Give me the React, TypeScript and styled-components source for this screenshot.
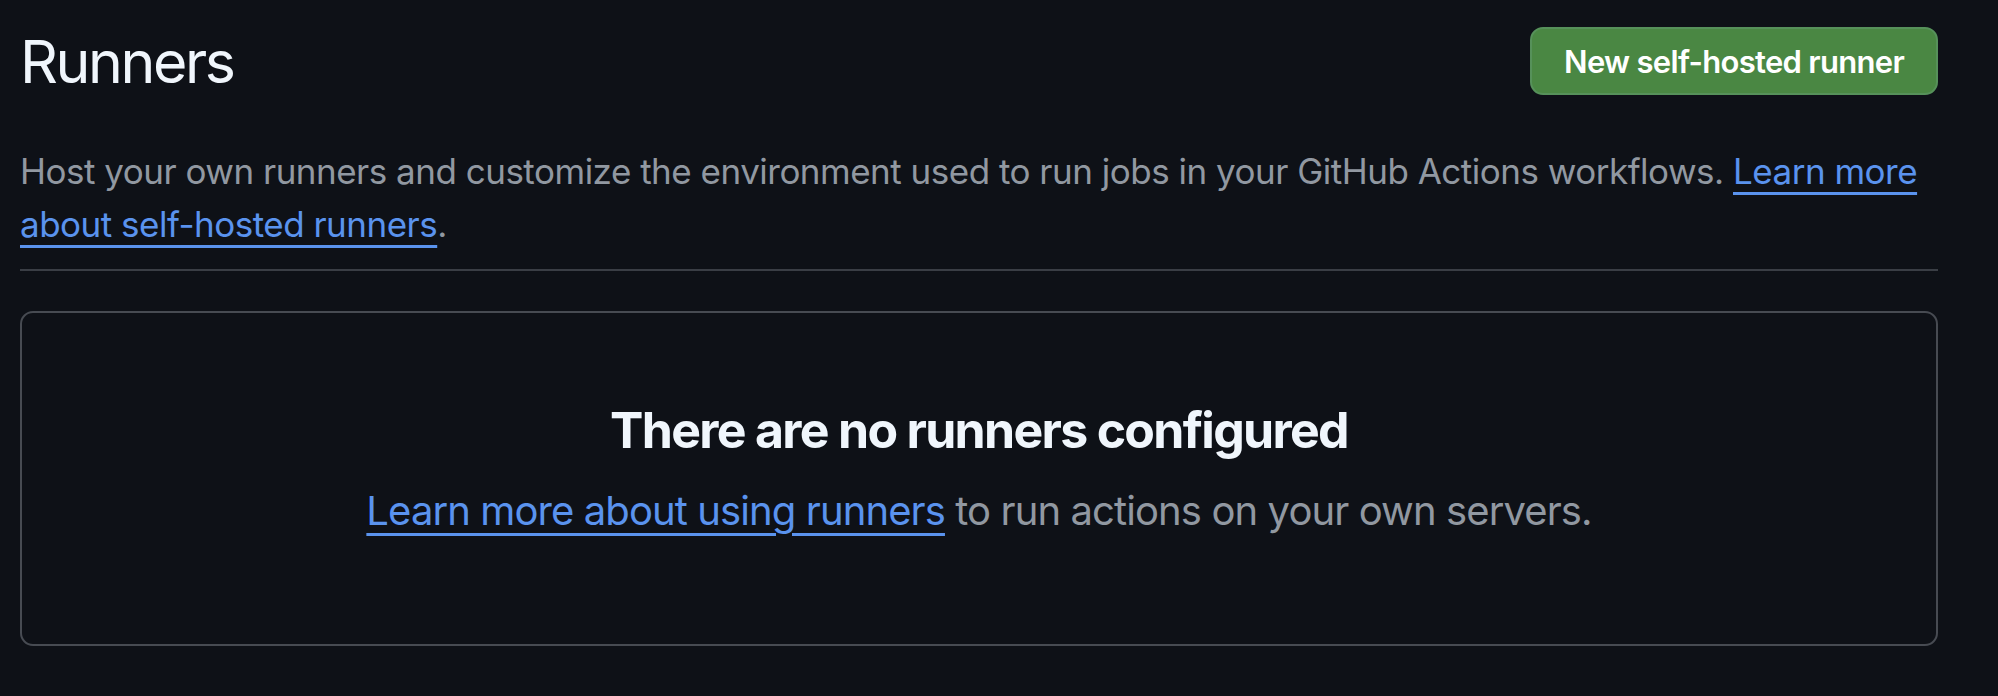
import React from "react";
import styled, { createGlobalStyle } from "styled-components";

const GlobalStyle = createGlobalStyle`
  html, body {
    margin: 0;
    padding: 0;
    background: #0e1117;
  }
  body {
    font-family: Inter, "Noto Sans", "Liberation Sans", sans-serif;
    -webkit-font-smoothing: antialiased;
  }
`;

const Page = styled.div`
  padding: 22px 60px 40px 20px;
  min-height: 696px;
  box-sizing: border-box;
`;

const Header = styled.div`
  display: flex;
  align-items: center;
  justify-content: space-between;
`;

const Title = styled.h2`
  margin: 2px 0 0;
  font-size: 59px;
  line-height: 76px;
  font-weight: 400;
  color: #f0f6fc;
  letter-spacing: -2.4px;
`;

const PrimaryButton = styled.button`
  height: 68px;
  padding: 0 32px;
  box-sizing: border-box;
  background: #4a8743;
  border: 2px solid #56915a;
  border-radius: 13px;
  color: #ffffff;
  font-family: inherit;
  font-size: 31px;
  font-weight: 600;
  letter-spacing: -0.7px;
  cursor: pointer;
`;

const Description = styled.p`
  margin: 45px 0 0;
  font-size: 35px;
  line-height: 53px;
  letter-spacing: -0.5px;
  color: #9198a1;
`;

const Link = styled.a`
  color: #5a93ee;
  text-decoration: underline;
  text-decoration-thickness: 3px;
  text-underline-offset: 8px;
`;

const Divider = styled.hr`
  margin: 18px 0 0;
  border: 0;
  height: 2px;
  background: #3a3e45;
`;

const Blankslate = styled.div`
  margin-top: 40px;
  border: 2px solid #474b52;
  border-radius: 13px;
  padding: 86px 32px 103px;
  display: flex;
  flex-direction: column;
  align-items: center;
  text-align: center;
`;

const BlankHeading = styled.h3`
  margin: 0;
  font-size: 50px;
  line-height: 62px;
  font-weight: 700;
  color: #f0f6fc;
  letter-spacing: -1.7px;
`;

const BlankText = styled.p`
  margin: 19px 0 0;
  font-size: 40px;
  line-height: 61px;
  letter-spacing: -0.9px;
  color: #9198a1;
`;

export default function App() {
  return (
    <>
      <GlobalStyle />
      <Page>
        <Header>
          <Title>Runners</Title>
          <PrimaryButton>New self-hosted runner</PrimaryButton>
        </Header>
        <Description>
          Host your own runners and customize the environment used to run jobs in your GitHub Actions
          workflows. <Link href="#">Learn more about self-hosted runners</Link>.
        </Description>
        <Divider />
        <Blankslate>
          <BlankHeading>There are no runners configured</BlankHeading>
          <BlankText>
            <Link href="#">Learn more about using runners</Link> to run actions on your own servers.
          </BlankText>
        </Blankslate>
      </Page>
    </>
  );
}
